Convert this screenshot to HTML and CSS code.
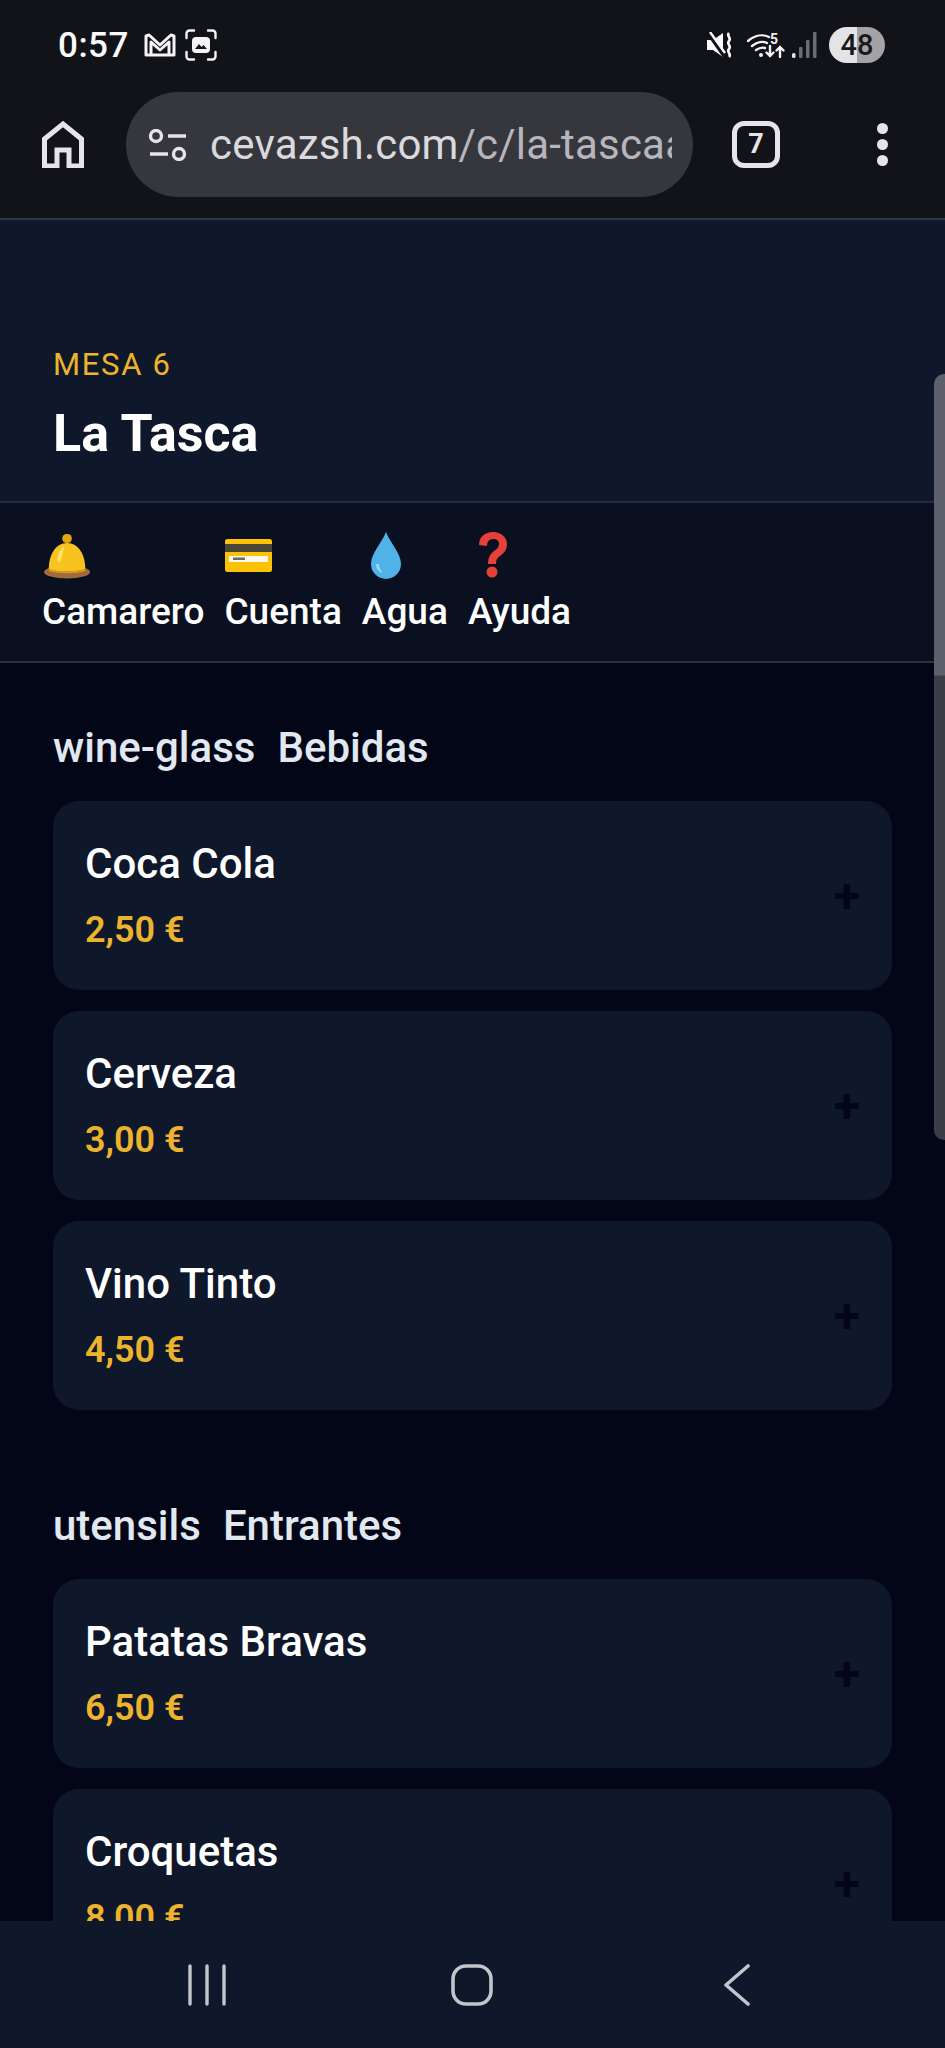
FILE: index.html
```html
<!DOCTYPE html>
<html lang="es">
<head>
  <meta charset="UTF-8" />
  <meta name="viewport" content="width=device-width, initial-scale=1.0"/>
  <title>La Tasca - Mesa 6</title>
  <link rel="stylesheet" href="styles.css">
</head>
<body>
  <div class="phone">
    <div class="browser">
      <div class="statusbar">
        <div class="status-left">
          <span class="time">0:57</span>
          <svg class="ic-mail" viewBox="0 0 32 24" fill="none" stroke="#f4f4f5" stroke-width="3" stroke-linejoin="round"><path d="M2 22V3l3-1 11 10L27 2l3 1v19z"/><path d="M7 22V9l9 8 9-8v13"/></svg>
          <svg class="ic-shot" viewBox="0 0 32 32" fill="none" stroke="#f4f4f5" stroke-width="2.4" stroke-linecap="round"><path d="M9 1.500H4.500a3 3 0 0 0-3 3V9M23 1.500h4.500a3 3 0 0 1 3 3V9M9 30.500H4.500a3 3 0 0 1-3-3V23M23 30.500h4.500a3 3 0 0 0 3-3V23"/><rect x="7" y="8" width="18" height="16" rx="4" fill="#f4f4f5" stroke="none"/><path d="M10 20l4-5 2.500 3 2-2 3.500 4z" fill="#111318" stroke="none"/></svg>
        </div>
        <div class="status-right">
          <svg class="ic-mute" viewBox="0 0 27 26" fill="none"><path d="M0 8h6l10-7v24L6 18H0z" fill="#fafafa"/><path d="M1 1l16 23" stroke="#111318" stroke-width="3.500"/><path d="M3 0l15 21" stroke="#fafafa" stroke-width="2.400"/><path d="M22 1c-3 3 3 5 0 8s3 5 0 8 3 5 0 8" stroke="#fafafa" stroke-width="2.600"/></svg>
          <svg class="ic-wifi" viewBox="0 0 38 26" fill="none" stroke="#f4f4f5" stroke-linecap="round"><path d="M1 9c7-6 15-7 21-4M5 14c5-4 11-5 15-3M9 18c3-2 6-3 9-2" stroke-width="2.400"/><circle cx="14" cy="23" r="2" fill="#f4f4f5" stroke="none"/><path d="M23 14v10m-3.500-3.500L23 24l3.500-3.500M33 25V15m-3.500 3.500L33 15l3.500 3.500" stroke-width="2.400"/><text x="23" y="12" class="wifi-5">5</text></svg>
          <svg class="ic-signal" viewBox="0 0 25 26"><rect x="0" y="21" width="3.500" height="5" rx="1.500" fill="#e4e4e7"/><rect x="7" y="15" width="3.500" height="11" rx="1" fill="#6b6d73"/><rect x="14" y="8" width="3.500" height="18" rx="1" fill="#6b6d73"/><rect x="21" y="0" width="3.500" height="26" rx="1" fill="#6b6d73"/></svg>
          <span class="battery">48</span>
        </div>
      </div>
      <div class="toolbar">
        <svg class="ic-home" viewBox="0 0 42 47" fill="none" stroke="#e4e4e9" stroke-width="5"><path d="M2.500 45V18L21 3l18.500 15v27H27V29H15v16z"/></svg>
        <div class="urlbar">
          <svg class="ic-tune" viewBox="0 0 40 32" fill="none" stroke="#e4e4e9" stroke-width="3.400"><circle cx="8" cy="7" r="5.500"/><path d="M20 7h18M2 25h18"/><circle cx="31" cy="25" r="5.500"/></svg>
          <span class="url">cevazsh.com<span class="url-path">/c/la-tascaa</span></span>
        </div>
        <div class="tabs">7</div>
        <div class="dots"><i></i><i></i><i></i></div>
      </div>
    </div>

    <div class="page">
      <header class="venue">
        <div class="table-no">MESA 6</div>
        <h1>La Tasca</h1>
      </header>

      <nav class="actions">
        <button class="action">
          <svg viewBox="0 0 48 48"><g transform="translate(2 0) scale(.96 1)"><ellipse cx="24" cy="41" rx="24" ry="6.500" fill="#a1693f"/><path d="M5 38c0-14 7-26 19-26s19 12 19 26c-6 3-32 3-38 0z" fill="#f7c320"/><path d="M5 38c10 3 28 3 38 0v2c-8 3-30 3-38 0z" fill="#d99a12"/><path d="M14 30c0-8 3-12 7-14-1 5-3 10-4 15z" fill="#fde26a"/><rect x="19" y="3" width="10" height="9" rx="4.500" fill="#e3a512"/></g></svg>
          <span>Camarero</span>
        </button>
        <button class="action">
          <svg viewBox="0 0 48 48"><rect x="1" y="8" width="47" height="33" rx="2.500" fill="#fdc107"/><rect x="1" y="13" width="47" height="8" fill="#4b4736"/><rect x="5" y="25" width="39" height="6" fill="#fbf8ea"/><rect x="9" y="26.500" width="12" height="2.500" fill="#6b6b6b"/></svg>
          <span>Cuenta</span>
        </button>
        <button class="action">
          <svg viewBox="0 0 48 48"><path d="M24 1C20 12 9 22 9 33a15 15 0 0 0 30 0C39 22 28 12 24 1z" fill="#4fb2e8"/><path d="M14 33c0 5 3 8 7 9-3-3-4-6-4-9z" fill="#9bd8f6"/></svg>
          <span>Agua</span>
        </button>
        <button class="action">
          <svg viewBox="0 0 48 48"><path d="M11 14C11 6 17 1 25 1c8 0 14 5 14 12 0 6-3 9-7 12-3 2-4 4-4 8h-8c0-6 2-10 6-13 3-2 5-4 5-7 0-3-2-5-6-5-4 0-6 3-6 7z" fill="#e5403a"/><circle cx="24" cy="41" r="5.500" fill="#e5403a"/></svg>
          <span>Ayuda</span>
        </button>
      </nav>

      <main class="menu">
        <section class="category">
          <h2>wine-glass<span class="cat-name">Bebidas</span></h2>
          <div class="item">
            <div><div class="item-name">Coca Cola</div><div class="item-price">2,50 €</div></div>
            <span class="add">+</span>
          </div>
          <div class="item">
            <div><div class="item-name">Cerveza</div><div class="item-price">3,00 €</div></div>
            <span class="add">+</span>
          </div>
          <div class="item">
            <div><div class="item-name">Vino Tinto</div><div class="item-price">4,50 €</div></div>
            <span class="add">+</span>
          </div>
        </section>
        <section class="category">
          <h2>utensils<span class="cat-name">Entrantes</span></h2>
          <div class="item">
            <div><div class="item-name">Patatas Bravas</div><div class="item-price">6,50 €</div></div>
            <span class="add">+</span>
          </div>
          <div class="item">
            <div><div class="item-name">Croquetas</div><div class="item-price">8,00 €</div></div>
            <span class="add">+</span>
          </div>
        </section>
      </main>

      <div class="scrollbar"></div>
    </div>

    <div class="navbar">
      <svg class="nav-recent" viewBox="0 0 40 42" fill="none" stroke="#c2c5cc" stroke-width="3.400" stroke-linecap="round"><path d="M3 2v38M20 2v38M37 2v38"/></svg>
      <svg class="nav-home" viewBox="0 0 42 42" fill="none" stroke="#c2c5cc" stroke-width="3.600"><rect x="2" y="2" width="38" height="38" rx="13"/></svg>
      <svg class="nav-back" viewBox="0 0 28 42" fill="none" stroke="#c2c5cc" stroke-width="3.600" stroke-linecap="round" stroke-linejoin="round"><path d="M25 2L3 21l22 19"/></svg>
    </div>
  </div>
</body>
</html>
```

FILE: styles.css
```css
* {
  box-sizing: border-box;
}

body {
  margin: 0;
  font-family: 'Roboto', 'Liberation Sans', sans-serif;
  background: #020617;
  color: #fff;
}

.phone {
  width: 945px;
  height: 2048px;
  display: flex;
  flex-direction: column;
  overflow: hidden;
}

/* browser chrome */
.browser {
  background: #111318;
  border-bottom: 2px solid #2f3747;
}

.statusbar {
  height: 90px;
  padding: 0 60px 0 58px;
  display: flex;
  justify-content: space-between;
  align-items: center;
}

.status-left,
.status-right {
  display: flex;
  align-items: center;
}

.time {
  font-size: 35px;
  font-weight: 500;
  color: #fafafa;
  letter-spacing: 0.5px;
}

.ic-mail {
  width: 32px;
  height: 24px;
  margin-left: 15px;
}

.ic-shot {
  width: 32px;
  height: 32px;
  margin-left: 9px;
}

.ic-mute {
  width: 27px;
  height: 26px;
}

.ic-wifi {
  width: 38px;
  height: 26px;
  margin-left: 13px;
}

.wifi-5 {
  font-family: 'Roboto', sans-serif;
  font-size: 14px;
  font-weight: 700;
  fill: #f4f4f5;
  stroke: none;
}

.ic-signal {
  width: 25px;
  height: 26px;
  margin-left: 7px;
}

.battery {
  width: 56px;
  height: 36px;
  margin-left: 12px;
  border-radius: 18px;
  background: linear-gradient(90deg, #e4e4e7 50%, #a3a3a6 50%);
  color: #18181b;
  font-size: 29px;
  font-weight: 500;
  line-height: 36px;
  text-align: center;
}

.toolbar {
  padding: 2px 0 21px 42px;
  display: flex;
  align-items: center;
}

.ic-home {
  flex: none;
  width: 42px;
  height: 47px;
}

.urlbar {
  flex: none;
  width: 567px;
  height: 105px;
  margin-left: 42px;
  padding: 0 21px 0 22px;
  border-radius: 53px;
  background: #36373c;
  display: flex;
  align-items: center;
  overflow: hidden;
}

.ic-tune {
  flex: none;
  width: 40px;
  height: 32px;
}

.url {
  margin-left: 22px;
  font-size: 42px;
  letter-spacing: 0.2px;
  color: #d9d9de;
  white-space: nowrap;
  overflow: hidden;
}

.url-path {
  color: #b6b6be;
}

.tabs {
  flex: none;
  width: 48px;
  height: 47px;
  margin-left: 39px;
  border: 5px solid #e4e4e9;
  border-radius: 12px;
  color: #e4e4e9;
  font-size: 27px;
  font-weight: 700;
  line-height: 37px;
  text-align: center;
}

.dots {
  margin-left: 97px;
  display: flex;
  flex-direction: column;
  gap: 5px;
}

.dots i {
  width: 11px;
  height: 11px;
  border-radius: 50%;
  background: #e4e4e9;
}

/* page */
.page {
  position: relative;
  flex: 1;
  min-height: 0;
  overflow: hidden;
}

.venue {
  height: 283px;
  padding: 127px 53px 0;
  background: #0f172a;
  border-bottom: 2px solid #232b3c;
}

.table-no {
  font-size: 31px;
  line-height: 36px;
  letter-spacing: 1.700px;
  color: #ecb32d;
}

h1 {
  margin: 21px 0 0;
  font-size: 52px;
  line-height: 60px;
  font-weight: 700;
}

.actions {
  height: 160px;
  padding: 28px 0 0 42px;
  background: #0a1020;
  border-bottom: 2px solid #293143;
  display: flex;
  gap: 20px;
}

.action {
  padding: 0;
  border: none;
  background: none;
  color: #fff;
  font: inherit;
  font-size: 37px;
  font-weight: 500;
  display: flex;
  flex-direction: column;
  align-items: flex-start;
}

.action svg {
  width: 48px;
  height: 48px;
}

.action span {
  margin-top: 11px;
  line-height: 44px;
}

.menu {
  padding: 62px 53px 0;
}

.category {
  margin-bottom: 93px;
}

h2 {
  margin: 0 0 30px;
  font-size: 42px;
  line-height: 46px;
  font-weight: 500;
  color: #e2e8f0;
}

.cat-name {
  margin-left: 22px;
}

.item {
  height: 189px;
  margin-bottom: 21px;
  padding: 0 32px;
  border-radius: 26px;
  background: #0f172a;
  display: flex;
  justify-content: space-between;
  align-items: center;
}

.item-name {
  font-size: 42px;
  line-height: 46px;
  font-weight: 500;
}

.item-price {
  margin-top: 23px;
  font-size: 36px;
  line-height: 40px;
  font-weight: 600;
  color: #ecb32d;
}

.add {
  font-size: 48px;
  font-weight: 700;
  color: #020617;
}

.scrollbar {
  position: absolute;
  top: 154px;
  right: 0;
  width: 11px;
  height: 766px;
  border-radius: 10px 0 0 10px;
  background: linear-gradient(180deg, #5c606c 0, #5c606c 301px, #3c3e47 302px);
}

/* android buttons */
.navbar {
  flex: none;
  height: 127px;
  padding-top: 43px;
  background: #0f172a;
  display: flex;
  align-items: flex-start;
  position: relative;
}

.nav-recent {
  width: 40px;
  height: 42px;
  margin-left: 187px;
}

.nav-home {
  width: 42px;
  height: 42px;
  margin-left: 224px;
}

.nav-back {
  width: 28px;
  height: 42px;
  margin-left: 230px;
}
```
